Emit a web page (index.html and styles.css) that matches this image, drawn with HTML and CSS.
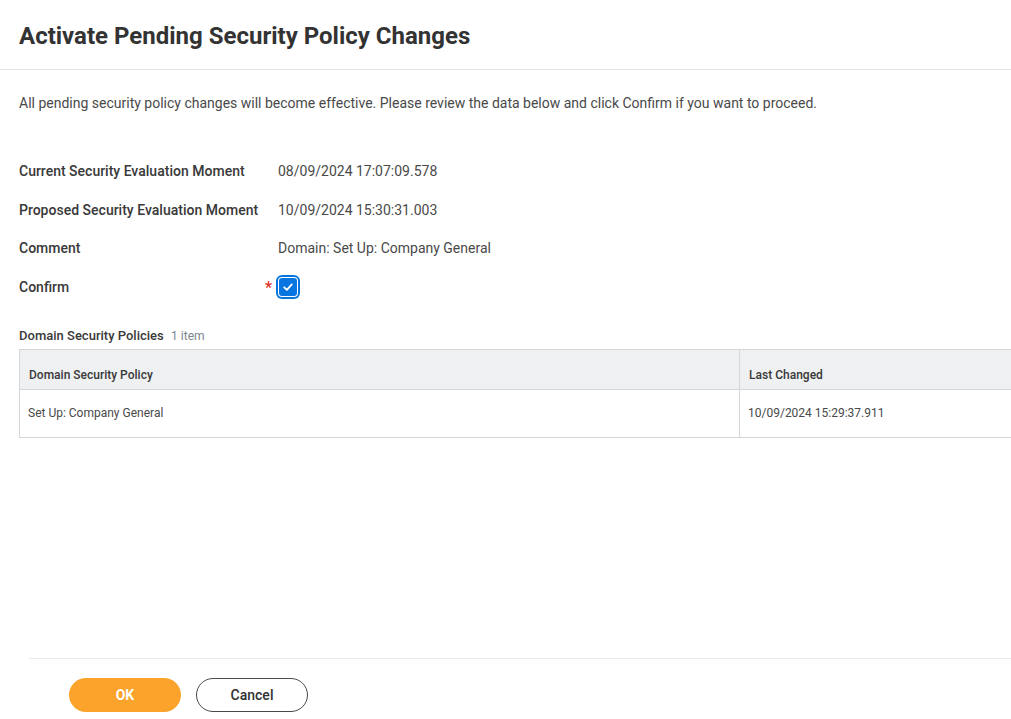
FILE: index.html
```html
<!DOCTYPE html>
<html lang="en">
<head>
<meta charset="utf-8">
<title>Activate Pending Security Policy Changes</title>
<link rel="stylesheet" href="styles.css">
</head>
<body>
<div class="page">
  <header class="page-header">
    <h1 class="title">Activate Pending Security Policy Changes</h1>
  </header>
  <main class="content">
    <p class="intro">All pending security policy changes will become effective. Please review the data below and click Confirm if you want to proceed.</p>
    <div class="form">
      <div class="row"><div class="label">Current Security Evaluation Moment</div><div class="value">08/09/2024 17:07:09.578</div></div>
      <div class="row"><div class="label">Proposed Security Evaluation Moment</div><div class="value">10/09/2024 15:30:31.003</div></div>
      <div class="row"><div class="label">Comment</div><div class="value">Domain: Set Up: Company General</div></div>
      <div class="row"><div class="label">Confirm</div><div class="value confirm"><span class="required">*</span><span class="checkbox"><svg viewBox="0 0 16 16" width="16" height="16"><path d="M4.2 8.3 L6.9 10.9 L11.8 5.4" fill="none" stroke="#fff" stroke-width="1.8" stroke-linecap="round" stroke-linejoin="round"/></svg></span></div></div>
    </div>
    <div class="section-title">Domain Security Policies <span class="count">1 item</span></div>
    <table class="grid">
      <thead>
        <tr><th class="col1">Domain Security Policy</th><th class="col2">Last Changed</th></tr>
      </thead>
      <tbody>
        <tr><td class="col1">Set Up: Company General</td><td class="col2">10/09/2024 15:29:37.911</td></tr>
      </tbody>
    </table>
  </main>
  <footer class="footer">
    <button class="btn btn-ok">OK</button>
    <button class="btn btn-cancel">Cancel</button>
  </footer>
</div>
</body>
</html>
```
FILE: styles.css
```css
html, body {
  margin: 0;
  padding: 0;
  height: 100%;
  overflow: hidden;
  background: #fff;
}
body {
  font-family: Roboto, "Liberation Sans", Arial, sans-serif;
  color: #333333;
}
.page {
  display: flex;
  flex-direction: column;
  height: 100vh;
  width: 100%;
  overflow: hidden;
}
.page-header {
  height: 69px;
  border-bottom: 1px solid #e2e4e6;
  display: flex;
  align-items: center;
  padding: 0 19px;
  flex-shrink: 0;
}
.title {
  margin: 0;
  font-size: 24px;
  font-weight: 700;
  color: #333333;
  line-height: 30px;
  padding-top: 2px;
}
.content {
  padding: 0 19px;
  flex: 1;
}
.intro {
  margin: 23px 0 0;
  font-size: 14px;
  line-height: 20px;
  color: #494949;
}
.form {
  margin-top: 48px;
  display: flex;
  flex-direction: column;
  gap: 18.5px;
}
.row {
  display: flex;
  align-items: center;
  min-height: 20px;
  font-size: 14px;
  line-height: 20px;
}
.label {
  width: 259px;
  flex-shrink: 0;
  font-family: "Roboto Medium", Roboto, "Liberation Sans", Arial, sans-serif;
  font-weight: 500;
  color: #3a3a3a;
}
.value {
  color: #494949;
}
.confirm {
  display: flex;
  align-items: center;
  height: 20px;
}
.required {
  color: #de2e21;
  font-size: 16px;
  font-weight: 500;
  margin-left: -13px;
  width: 13px;
  line-height: 20px;
  padding-top: 3px;
}
.checkbox {
  width: 18px;
  height: 18px;
  border-radius: 3px;
  background: #0875e1;
  box-shadow: 0 0 0 1px #fff, 0 0 0 3px #0875e1;
  display: flex;
  align-items: center;
  justify-content: center;
  margin-left: 1px;
}
.section-title {
  margin-top: 30px;
  font-size: 13px;
  line-height: 16px;
  font-family: "Roboto Medium", Roboto, "Liberation Sans", Arial, sans-serif;
  font-weight: 500;
  color: #3a3a3a;
  padding-top: 1px;
}
.count {
  font-family: Roboto, "Liberation Sans", Arial, sans-serif;
  font-weight: 400;
  font-size: 12px;
  color: #7b858f;
  margin-left: 4px;
}
.grid {
  margin-top: 5px;
  border-collapse: collapse;
  width: 1150px;
  font-size: 12px;
  border: 1px solid #d4d7da;
}
.grid th {
  background: #eef0f2;
  font-family: "Roboto Medium", Roboto, "Liberation Sans", Arial, sans-serif;
  font-weight: 500;
  text-align: left;
  height: 33px;
  padding: 0 9px 6px;
  vertical-align: bottom;
  color: #3a3a3a;
  border-bottom: 1px solid #d4d7da;
  line-height: 16px;
}
.grid td {
  height: 47px;
  padding: 0 8px;
  color: #494949;
  line-height: 16px;
  vertical-align: middle;
}
.grid .col1 {
  width: 701px;
  border-right: 1px solid #d4d7da;
}
.footer {
  flex-shrink: 0;
  margin-left: 29px;
  border-top: 1px solid #e8e9ea;
  padding: 19px 0 7px 40px;
  display: flex;
  gap: 15px;
}
.btn {
  width: 112px;
  height: 34px;
  border-radius: 17px;
  font-family: Roboto, "Liberation Sans", Arial, sans-serif;
  font-size: 14px;
  cursor: pointer;
  padding: 0;
}
.btn-ok {
  background: #fba32a;
  border: none;
  color: #fff;
  font-weight: 700;
}
.btn-cancel {
  background: #fff;
  border: 1px solid #4a4a4a;
  color: #333333;
  font-family: "Roboto Medium", Roboto, "Liberation Sans", Arial, sans-serif;
  font-weight: 500;
}
```
